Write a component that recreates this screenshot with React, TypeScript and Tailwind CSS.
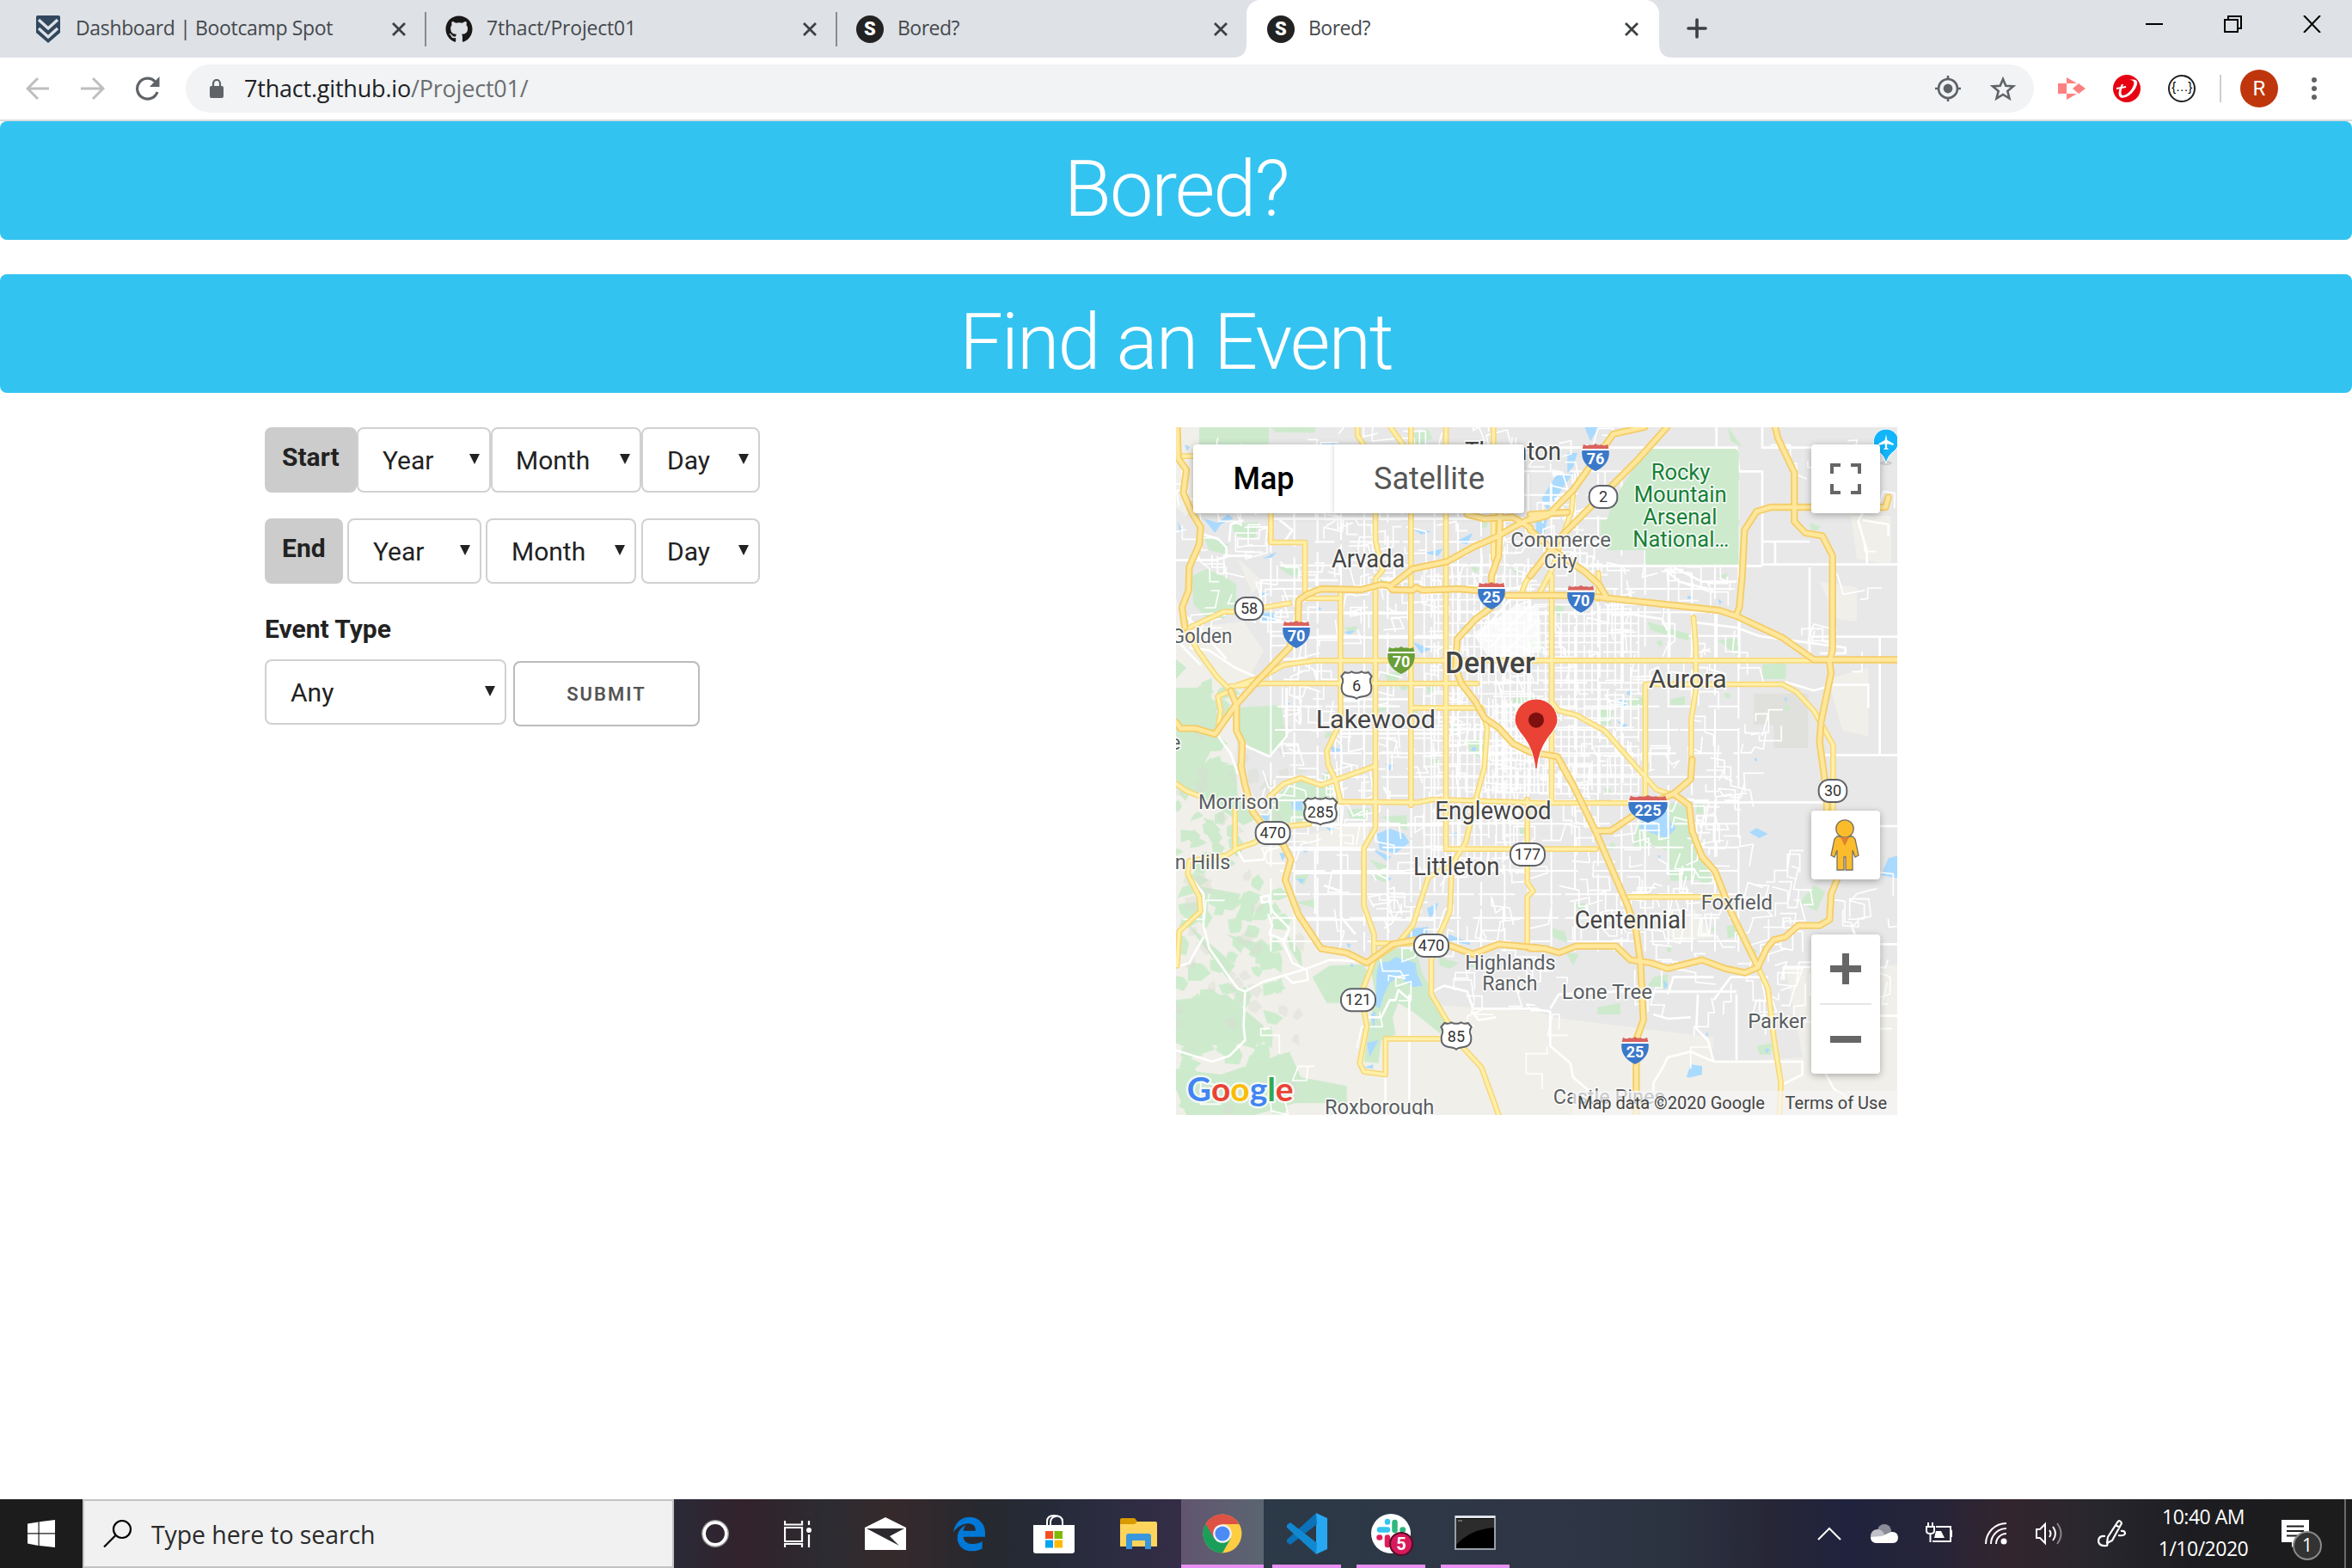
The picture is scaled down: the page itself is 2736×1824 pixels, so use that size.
import React from "react";
import { FaGithub, FaEdgeLegacy } from "react-icons/fa6";

const UI = "font-['Open_Sans','Noto_Sans',sans-serif]";

/* ---------- Browser chrome ---------- */

function CloseX({ className = "" }: { className?: string }) {
  return (
    <svg className={`h-4 w-4 shrink-0 ${className}`} viewBox="0 0 16 16" stroke="#3c4043" strokeWidth="2.8" fill="none">
      <path d="M1 1 L15 15 M15 1 L1 15" />
    </svg>
  );
}

function SBadge() {
  return (
    <div className="flex h-8 w-8 shrink-0 items-center justify-center rounded-full bg-[#222] font-['Roboto',sans-serif] text-[22px] font-black text-white">
      S
    </div>
  );
}

function Tab({ icon, title, w, sep, spacing = "" }: { icon: React.ReactNode; title: string; w: string; sep?: boolean; spacing?: string }) {
  return (
    <div className={`flex h-[67px] shrink-0 items-center ${w}`}>
      {icon}
      <span className={`ml-4 flex-1 pb-[3px] text-[23px] leading-[32px] whitespace-nowrap text-[#45494d] ${spacing}`}>{title}</span>
      <CloseX />
      <div className={`ml-[22px] h-10 w-[2px] ${sep ? "bg-[#888b90]" : "bg-transparent"}`} />
    </div>
  );
}

function TabStrip() {
  return (
    <div className="flex h-[67px] bg-[#dee1e6]">
      <div className="flex pl-10">
        <Tab
          w="w-[456px]"
          sep
          spacing="tracking-[-0.35px]"
          title="Dashboard | Bootcamp Spot"
          icon={
            <svg className="h-8 w-8 shrink-0" viewBox="0 0 32 32">
              <path d="M2 2 Q2 0 4 0 H28 Q30 0 30 2 V20 L16 32 L2 20Z" fill="#31475e" />
              <path d="M5 5 L16 15 L27 5 M5 15 L16 25 L27 15" stroke="#dee1e6" strokeWidth="3.4" fill="none" />
            </svg>
          }
        />
        <div className="w-[22px]" />
        <Tab w="w-[456px]" sep spacing="tracking-[-0.2px]" title="7thact/Project01" icon={<FaGithub className="h-8 w-8 shrink-0 text-[#191717]" />} />
        <div className="w-[22px]" />
        <Tab w="w-[456px]" spacing="tracking-[-0.5px]" title="Bored?" icon={<SBadge />} />
      </div>
      <div className="relative -ml-[2px] h-[67px] w-[480px] rounded-t-2xl bg-white pl-6">
        <svg className="absolute bottom-0 -left-4 h-4 w-4" viewBox="0 0 16 16"><path d="M16 0 V16 H0 Q16 16 16 0" fill="#fff" /></svg>
        <svg className="absolute -right-4 bottom-0 h-4 w-4" viewBox="0 0 16 16"><path d="M0 0 V16 H16 Q0 16 0 0" fill="#fff" /></svg>
        <Tab w="w-[456px]" spacing="tracking-[-0.5px]" title="Bored?" icon={<SBadge />} />
      </div>
      <svg className="mt-[21px] ml-8 h-6 w-6" viewBox="0 0 24 24" stroke="#3c4043" strokeWidth="3.6" strokeLinecap="round"><path d="M2 12 H22 M12 2 V22" /></svg>
      <div className="flex-1" />
      <svg className="mt-[18px] mr-9 h-5 w-[204px]" viewBox="0 0 204 20" fill="none" stroke="#000" strokeWidth="2">
        <path d="M0 10 H20" />
        <path d="M92 5 H107 V19 H92Z M96 5 V1 H111 V15 H107" />
        <path d="M184 0 L203 20 M203 0 L184 20" />
      </svg>
    </div>
  );
}

function Toolbar() {
  return (
    <div className="flex h-[74px] items-center border-b-2 border-[#dadce0] bg-white pr-9 pl-[30px]">
      <svg className="h-7 w-7" viewBox="0 0 28 28" fill="none" stroke="#bdbec0" strokeWidth="3"><path d="M27 14 H3 M14 2 L2 14 L14 26" /></svg>
      <svg className="ml-[36px] h-7 w-7" viewBox="0 0 28 28" fill="none" stroke="#bdbec0" strokeWidth="3"><path d="M0 14 H25 M14 2 L26 14 L14 26" /></svg>
      <svg className="ml-[36px] h-7 w-7" viewBox="0 0 28 28">
        <path d="M25 18 A12 12 0 1 1 22.5 6" fill="none" stroke="#5f6368" strokeWidth="3.2" />
        <path d="M27.5 0 V12 H16Z" fill="#5f6368" />
      </svg>
      <div className="ml-[30px] flex h-14 w-[2150px] items-center rounded-full bg-[#f1f3f4] pr-[21px] pl-[28px]">
        <svg className="h-[22px] w-4" viewBox="0 0 16 22">
          <rect x="0" y="8" width="16" height="14" rx="2" fill="#5f6368" />
          <path d="M4 9 V5 A4 4 0 0 1 12 5 V9" fill="none" stroke="#5f6368" strokeWidth="2.2" />
        </svg>
        <span className="ml-[24px] flex-1 text-[27px] leading-9 tracking-[-0.2px] whitespace-nowrap text-[#202124]">
          7thact.github.io<span className="text-[#6b6e72]">/Project01/</span>
        </span>
        <svg className="h-[30px] w-[30px]" viewBox="0 0 30 30" fill="none" stroke="#5f6368" strokeWidth="2.6">
          <circle cx="15" cy="15" r="11" /><circle cx="15" cy="15" r="5.4" fill="#5f6368" stroke="none" />
          <path d="M15 0 V5 M15 25 V30 M0 15 H5 M25 15 H30" />
        </svg>
        <svg className="ml-[34px] h-[30px] w-[30px]" viewBox="0 0 30 30" fill="none" stroke="#5f6368" strokeWidth="2.6">
          <path d="M15 4 L18.3 11.8 L27 12.4 L20.3 18 L22.5 26.5 L15 22 L7.5 26.5 L9.7 18 L3 12.4 L11.7 11.8Z" />
        </svg>
      </div>
      <svg className="ml-[28px] h-[26px] w-8" viewBox="0 0 32 26">
        <path d="M0 7 H10 V19 H0Z M10 0 L22 7 H10Z M10 26 L22 19 H10Z M24 7 L32 13 L24 19Z" fill="#ff8080" />
        <path d="M10 7 H21 V19 H10Z" fill="#fff" />
        <path d="M24 7 L17 13 L24 19Z" fill="#ff8080" />
      </svg>
      <svg className="ml-8 h-8 w-8" viewBox="0 0 32 32">
        <circle cx="16" cy="16" r="16" fill="#e60012" />
        <path d="M10 11 Q3 24 10 27 Q19 27 26 16 Q33 3 18 6 Q26 5 24 12 Q20 22 12 24 Q7 24 12 11Z" fill="#fff" />
        <path d="M4 16 L15 14" fill="none" stroke="#fff" strokeWidth="2" />
      </svg>
      <div className="ml-8 flex h-8 w-8 items-center justify-center rounded-full border-2 border-[#222] pb-1 font-['Liberation_Sans',sans-serif] text-[15px] tracking-[-0.5px] text-black">{"{…}"}</div>
      <div className="ml-7 h-8 w-[2px] bg-[#cccdd0]" />
      <div className="ml-[22px] flex h-11 w-11 items-center justify-center rounded-full bg-[#bf360c] font-['Roboto',sans-serif] text-[24px] text-white">R</div>
      <svg className="ml-[39px] h-7 w-[6px]" viewBox="0 0 6 28" fill="#5f6368"><circle cx="3" cy="4" r="3" /><circle cx="3" cy="14" r="3" /><circle cx="3" cy="24" r="3" /></svg>
    </div>
  );
}

/* ---------- Form ---------- */

function Select({ label, className }: { label: string; className: string }) {
  return (
    <div className={`flex h-[76px] items-center rounded-lg border-2 border-[#d1d1d1] bg-white pr-[11px] ${className}`}>
      <span className="flex-1 pt-px text-[30px] leading-none">{label}</span>
      <svg className="mb-[3px] h-3 w-3" viewBox="0 0 12 12"><path d="M0 0 H12 L6 12Z" fill="#222" /></svg>
    </div>
  );
}

function EventForm() {
  return (
    <div className="w-[1060px] text-[#222]">
      <div className="flex">
        <div className="h-[76px] w-[107px] rounded-lg bg-[#ccc] pt-[17px] pl-5 text-[30px] leading-[36px] font-bold">Start</div>
        <Select label="Year" className="w-[156px] pl-[28px]" />
        <Select label="Month" className="w-[175px] pl-[27px]" />
        <Select label="Day" className="w-[138px] pl-[28px]" />
      </div>
      <div className="mt-[30px] flex">
        <div className="h-[76px] w-[91px] rounded-lg bg-[#ccc] pt-[17px] pl-5 text-[30px] leading-[36px] font-bold">End</div>
        <Select label="Year" className="ml-[5px] w-[156px] pl-[28px]" />
        <Select label="Month" className="ml-[5px] w-[175px] pl-[28px]" />
        <Select label="Day" className="ml-[6px] w-[138px] pl-[28px]" />
      </div>
      <div className="mt-[35px] text-[30px] leading-[36px] font-bold">Event Type</div>
      <div className="mt-[17px] flex">
        <Select label="Any" className="w-[281px] pl-[28px]" />
        <div className="mt-[2px] ml-2 flex h-[76px] w-[217px] items-center justify-center rounded-lg border-2 border-[#bbb] text-[22px] font-semibold tracking-[2px] text-[#555]">SUBMIT</div>
      </div>
    </div>
  );
}

/* ---------- Map drawing: third-of-a-pixel units ---------- */

type Pt = [number, number];

function makeRandom(seed: number) {
  let s = seed;
  return () => {
    s = (s * 1664525 + 1013904223) % 4294967296;
    return s / 4294967296;
  };
}

const A = "translate(0 0)";
const B = "translate(1260 0)";
const C = "translate(0 1200)";
const D = "translate(1260 1200)";

const highways: [string, string][] = [
  [A, "M24 1050 L40 1072 H90 L160 1092 L225 1000 L300 915 L420 790 L450 700 L452 625 L480 605 L530 585 L670 588 L740 570 L765 573 L780 588 L850 590 L862 580 L885 590 L1010 585 L1125 595"],
  [A, "M780 570 L850 515 L970 490 L1060 440 L1140 405 L1200 370 L1290 325 M1040 325 L1100 340 L1200 335 L1260 372"],
  [A, "M1155 320 L1150 470 L1125 540 L1125 650 L1070 690 L1005 760 L1000 860 L1020 915 L1070 980 L1100 1035 L1150 1070 L1200 1125 L1260 1155 L1355 1170 L1410 1270"],
  [A, "M28 20 L32 130 L60 170 L50 250 L80 320 L110 370 L105 430 L70 510 L68 590 L45 650 L55 720 M215 940 L235 990 L235 1080 L255 1120 L252 1215"],
  [B, "M400 20 L290 45 L150 240 L60 330 L0 345 M478 20 L370 140 L250 260 L110 400 L0 540 M0 325 L130 318"],
  [B, "M-80 608 H130 L240 614 L660 660 L720 680 L880 755 L990 832 H1285 M0 380 L80 450 L190 525 L240 570 L270 620"],
  [B, "M720 675 L730 650 L740 540 L748 380 L790 315 L840 300 H1240 L1250 265 M855 20 L865 60 L922 180 V350 L960 390 L1020 400 L1055 470 V800 L1045 840 L1050 880 L1015 1050 L1010 1120 L1035 1300 V1380"],
  [C, "M250 0 L265 70 L290 160 L330 215 L400 280 L425 330 L405 400 L450 520 L530 640 L620 655 L690 690 L780 625 L860 610 L980 630 L1060 660 L1150 625 L1290 638"],
  [D, "M110 0 L150 70 L230 235 L340 490 L370 580 L385 690 L395 890 L370 960 V1221"],
  [D, "M0 640 L50 640 L100 655 L160 632 H300 L350 680 L420 690 L480 710 L600 680 L680 710 L750 725 L795 705 L825 640 L850 610 L890 600 L935 560 H1010 L1045 540 L1050 450 L1075 390"],
  [D, "M565 -20 L560 50 L500 100 L430 130 L280 230 H235 M500 100 L555 140 L565 230 L600 320 L645 370 L700 510 L795 705"],
];

const arterials: [string, string][] = [
  [A, "M720 320 V415 L745 520 L720 550 V1420 L680 1490 V1690 L715 1790 V1880 L670 2000 L690 2110 L665 2240 L680 2270 L755 2280 V2155 H950"],
  [A, "M844 20 V1340 M966 20 V1493 H1490 M598 590 V1050 L550 1150 L555 1200 L580 1250 L598 1325"],
  [A, "M355 320 V423 H474 V610 M480 618 H598 M658 20 V50 L690 100 L720 140 M772 20 L815 80 L844 140 M1132 20 V480"],
  [A, "M24 122 H100 M60 725 L190 665 H240 M330 650 L420 635 M55 720 L100 800 L165 890 L215 940 M215 925 L330 915 H1075 M240 920 L330 890 L400 850 L510 835 H2545"],
  [A, "M844 1000 H1090 L1110 1070 L1100 1210 L1070 1320 L1035 1470 L985 1550 L905 1590 L850 1760 L800 1820 L700 1890"],
  [A, "M215 940 L170 960 L180 1010 L172 1060 M350 1310 L400 1265 L460 1245 L530 1270 L720 1203 M1290 500 L1245 560 L1230 600"],
  [B, "M75 540 V980 L100 1010 L160 1025 L260 1080 L440 1285 L500 1305 M75 980 V1325 M150 250 L145 310 L115 400 L75 520 L30 605 M238 530 V620"],
  [B, "M402 1310 V918 H880 L930 945 L990 1010 L1057 1130 V1380 M570 685 L578 790 V940 L562 1040 V1210"],
  [C, "M595 128 L870 130 L920 120 L1290 132 H1600 M400 215 L490 205 M715 622 H860 M985 390 L980 510 L945 590 L915 680 V800 L980 910 L1030 990 L1090 1055 L1150 1221 M1250 120 V410 L1270 440 L1250 460 V640"],
  [C, "M24 65 L60 90 L110 110 M230 160 V290 M28 700 L35 580 L110 510 L105 460 L65 380 L70 335 L200 315 L240 290 L300 270 L320 250"],
  [D, "M340 460 H670 M795 705 L830 780 L850 950 L875 1110 L870 1221"],
];

const whiteRoads: [string, string][] = [
  [A, "M120 395 L170 410 L200 440 V470 H290 M24 485 H160 L210 470 M355 340 H1130 M210 420 L215 360 L260 345 M320 555 H590 M320 555 V700 H400 M600 670 H840 M480 755 H960 M410 930 V1100 L350 1170 L260 1130 M600 970 H840 M600 1090 H960 M400 423 L430 380 L380 340"],
  [A, "M70 790 L140 800 L230 860 L320 900 M24 760 L60 800 L110 850 M60 680 L120 740 L200 830 M165 1090 L215 1160 L240 1230"],
  [B, "M0 92 H720 L730 175 H810 V500 H1285 M810 20 V92 H985 M180 505 H810 M810 420 H975 M855 420 V500 M975 510 V830 M980 752 H1285 M1220 752 V1165 M1010 1165 H1285 M1160 320 L1145 350 L1175 450 V500 M1160 345 L1250 360 V400"],
  [B, "M470 515 L520 560 L640 590 M500 510 L600 560 L720 560 M560 700 L720 720 L800 750 L1100 790 V810 H1010 M890 910 L990 940 L1060 920 H1180 V1000 M650 20 V95 M730 700 V835 M650 660 V835 M486 670 V835 M330 670 L460 690 L480 730"],
  [C, "M75 390 L120 450 V560 L140 640 L210 740 L240 780 L265 790 L330 755 L480 710 L560 680 L680 685 M120 600 L70 690 L24 705 M265 790 L260 910 L265 960 L210 1015 L150 1035 L24 995 M400 280 L340 300 L330 330 L260 335 L240 300"],
  [C, "M320 460 L350 455 V475 L325 480Z M350 475 L360 510 L420 570 L400 610 L350 590 L360 560 L345 520 M420 570 L400 620 L430 690 L480 715 L485 750 L430 760 L405 735 M838 800 V1180 M755 1090 V1180 M690 880 L740 880 L770 820 H790 L800 785 L835 815"],
  [C, "M470 210 H960 M425 295 H720 M440 377 H960 M600 215 V530 L650 590 M470 540 H930 M510 300 V520 M540 420 L600 440 M920 790 L960 770 L1040 790 L1060 850 L1290 850 M1060 860 L1080 890 L1140 880"],
  [D, "M0 850 L70 860 V980 L140 1040 L150 1090 L210 1140 M70 850 L100 800 L300 790 H720 M720 800 V1030 M585 800 L580 920 L620 960 L640 1035 H950 V1080 L870 1120 M640 1035 L560 1000 L480 1020 L460 1060 L430 1110 V1180 M430 870 L480 885 L560 880"],
  [D, "M885 750 V705 H1000 M1200 875 H1290 M1200 625 H1290 M1000 213 H1290 M570 130 H1040 M1030 1075 L1060 1130 L1140 1180 M480 800 L500 740 L640 740 M640 820 L700 740 L830 740"],
];

const parks: [string, string][] = [
  [A, "M105 20 H348 V81 H105Z M355 20 H510 V40 L370 38Z M850 45 L900 25 L920 60 L860 90Z"],
  [A, "M120 400 L150 410 L208 430 L200 465 L140 450Z M80 540 L130 515 L200 545 L235 570 L232 640 L190 690 L130 685 L85 640Z M220 360 L310 350 L300 410 L230 400Z"],
  [A, "M240 1000 L390 990 L400 1060 L410 1110 L350 1170 L290 1150 L240 1080Z M24 830 L60 860 L24 900Z M24 930 L120 930 L190 1060 L120 1200 L24 1230Z M380 510 L460 505 L440 550Z M610 720 L660 715 L640 745Z"],
  [A, "M1255 760 H1300 V810 H1255Z M750 880 L810 875 L780 940Z M1200 965 L1290 960 V1010 H1200Z M1040 1120 L1100 1100 L1110 1180 L1050 1160Z"],
  [B, "M405 97 H715 Q728 97 728 120 V500 H402 V450 H270 L245 400 V345 H270Z M690 20 L740 90 L700 70Z"],
  [B, "M90 640 L120 650 L105 685 L85 670Z M410 700 L560 745 L550 765 L420 730Z M655 765 L725 755 V820Z M810 848 L892 845 V900 H812Z M340 970 L400 960 L390 1000 L345 1005Z M240 1005 L290 1010 L280 1060 L245 1060Z M490 970 L540 960 L540 990 L490 990Z M650 540 L690 530 L680 550Z"],
  [C, "M24 0 H230 L240 110 L300 190 L260 210 L100 100 L24 60Z M370 110 L440 50 L600 80 L570 190 L330 210Z M620 155 L700 150 L690 190 L630 185Z M740 180 L830 175 V230Z M430 390 L490 375 L470 420Z M440 480 L520 465 L510 500Z M700 330 L760 350 L740 375Z M700 390 L755 380 V410Z"],
  [C, "M410 590 L460 650 L465 710 L420 640Z M500 740 L560 700 L680 695 L700 740 L620 830 L550 830Z M700 690 L790 640 L860 640 L885 730 L950 840 L985 930 L950 940 L850 860 L800 830 L780 880 L790 940 L740 960 L730 1040 L680 1035 L700 900 L720 800Z M940 670 L1010 690 L980 710 L945 700Z"],
  [C, "M200 590 L340 630 L300 660Z M90 420 L250 450 L230 500Z M60 550 L230 700 L200 740Z M24 820 L200 800 L330 910 L300 990 L200 960 L90 1000 L24 970Z M24 1060 L180 1080 L420 1000 L460 1090 L620 1120 V1180 H440 L300 1221 H60 L24 1130Z"],
  [D, "M370 210 L500 130 L555 150 L560 240 L600 330 L640 400 L600 420 L590 400 L490 405 L480 300 L430 280 L360 290Z M580 135 H604 V170 H580Z M430 740 L480 730 L480 780 L410 770Z M235 845 L315 830 V870 L235 870Z M75 570 L120 580 L130 620 L80 600Z M125 655 L170 660 L150 700Z M685 560 L730 555 L735 590 L690 605Z M790 980 L845 970 L840 1010 L800 1010Z M940 480 L990 420 L1030 440 L1000 510Z M160 485 L190 480 V510 L165 505Z"],
];

const waters: [string, string][] = [
  [A, "M55 80 L72 90 L62 105Z M120 340 L170 355 L205 325 L225 340 L180 360 L160 390Z M30 350 L50 390 L35 385Z M325 480 L375 455 L360 475Z M315 670 H370 V700 H320Z M520 80 L600 72 L560 84Z M850 375 L915 385 L880 395Z M890 460 L955 445 L940 470Z M850 770 L915 795 L880 810Z M610 735 L650 730 L630 745Z M560 1130 L610 1150 L570 1155Z M320 600 L345 595 L325 615Z M755 1195 L785 1200 L770 1220Z M1000 420 L1060 390 L1040 430Z"],
  [B, "M190 20 H240 L210 70Z M130 110 H165 L150 160 L130 180Z M90 190 L150 180 L110 240 L60 310 L40 270Z M20 350 L60 340 L50 390 L20 395Z M310 970 L335 970 V995 H310Z M300 1045 L340 1060 L330 1070Z M30 800 L50 800 L40 810Z M655 620 L670 630 L660 640Z M425 465 L440 470 L432 482Z M885 965 L897 965 L893 980Z"],
  [C, "M725 240 L770 222 L820 240 L838 270 L790 308 L735 295Z M705 290 L775 320 L760 335Z M425 130 L465 125 V160 L430 155Z M315 170 L350 175 L340 200Z M545 215 L580 220 L560 230Z M445 395 L475 398 L460 415Z M385 305 L410 310 L395 335Z M850 570 L905 565 L900 590 L850 610 L830 600Z M975 590 L1050 620 L1050 628 L975 612Z"],
  [C, "M735 690 L770 685 L790 670 L860 690 L865 730 L885 770 L850 775 L800 735 L770 760 L750 800 L735 850 L720 840 L725 720Z M900 500 L940 480 L930 510 L910 535Z M705 870 L720 860 L715 930Z M690 970 L730 960 L700 1020Z M680 1055 L712 1045 V1060Z M975 240 L1010 235 L1000 250Z"],
  [D, "M380 220 L400 185 L480 150 L490 200 L510 220 L475 255 L400 228Z M765 235 L790 220 L830 240 L800 255Z M1225 385 L1250 325 L1285 315 V395Z M545 1090 L560 1045 L600 1050 L600 1080 L560 1090Z M465 750 L480 765 L470 785Z M820 990 L835 990 L825 1008Z M612 935 L622 935 L618 948Z"],
];

function buildStreets(): string {
  const rnd = makeRandom(77);
  const isRural = (x: number, y: number) =>
    (x < 700 && y > 1560) || (x < 340 && y > 700) || (x > 980 && y > 2050) || (x < 980 && y > 1980) ||
    (x > 2070 && y > 900 && y < 1550) || (x > 1980 && y < 1000) || (x > 1520 && x < 2000 && y < 500);
  let d = "";
  for (let i = 0; i < 820; i++) {
    let x = 30 + rnd() * 2500;
    let y = 25 + rnd() * 2380;
    if (isRural(x, y) && rnd() > 0.07) continue;
    d += `M${x.toFixed(0)} ${y.toFixed(0)}`;
    const n = 2 + Math.floor(rnd() * 4);
    let horizontal = rnd() > 0.5;
    for (let k = 0; k < n; k++) {
      const step = (20 + rnd() * 60) * (rnd() > 0.35 ? 1 : -1);
      const skew = rnd() > 0.55 ? (rnd() - 0.5) * 44 : 0;
      if (horizontal) { x += step; y += skew; } else { y += step; x += skew; }
      horizontal = !horizontal;
      d += `L${x.toFixed(0)} ${y.toFixed(0)}`;
    }
  }
  return d;
}

function buildGrid(x0: number, y0: number, x1: number, y1: number, dx: number, dy: number, seed: number): string {
  const rnd = makeRandom(seed);
  let d = "";
  for (let x = x0; x <= x1; x += dx) {
    let y = y0 + rnd() * 40;
    while (y < y1) {
      const len = 50 + rnd() * 260;
      d += `M${x.toFixed(0)} ${y.toFixed(0)}V${Math.min(y1, y + len).toFixed(0)}`;
      y += len + rnd() * 50;
    }
  }
  for (let y = y0; y <= y1; y += dy) {
    let x = x0 + rnd() * 40;
    while (x < x1) {
      const len = 60 + rnd() * 260;
      d += `M${x.toFixed(0)} ${y.toFixed(0)}H${Math.min(x1, x + len).toFixed(0)}`;
      x += len + rnd() * 60;
    }
  }
  return d;
}

function buildShards(seed: number, count: number, box: [number, number, number, number], size: number): string {
  const rnd = makeRandom(seed);
  let d = "";
  for (let i = 0; i < count; i++) {
    const cx = box[0] + rnd() * (box[2] - box[0]);
    const cy = box[1] + rnd() * (box[3] - box[1]);
    const pts: Pt[] = [];
    for (let k = 0; k < 5; k++) {
      const a = (k / 5) * Math.PI * 2;
      const r = size * (0.3 + rnd());
      pts.push([cx + Math.cos(a) * r, cy + Math.sin(a) * r]);
    }
    d += "M" + pts.map((p) => p.map((v) => v.toFixed(0)).join(" ")).join("L") + "Z";
  }
  return d;
}

const streets = buildStreets();
const cityGrid =
  buildGrid(890, 500, 1240, 1580, 25, 41, 5) +
  buildGrid(1260, 640, 1640, 1300, 27, 33, 9) +
  buildGrid(1130, 960, 1350, 1300, 16, 28, 12);
const mileGrid = buildGrid(355, 175, 1990, 1850, 81.6, 82, 21);

function Interstate({ x, y, n, green, wide }: { x: number; y: number; n: string; green?: boolean; wide?: boolean }) {
  const w = wide ? 138 : 96;
  return (
    <g transform={`translate(${x} ${y})`}>
      <g transform={`scale(${w / 96} 1)`}>
        <path d="M6 2 Q18 10 28 4 Q40 8 48 0 Q56 8 68 4 Q78 10 90 2 L94 18 H2Z" fill={green ? "#689f38" : "#d9625e"} />
        <path d="M1 24 H95 Q100 72 48 96 Q-4 72 1 24Z" fill={green ? "#689f38" : "#3a78c9"} />
      </g>
      <rect x="0" y="18" width={w} height="6" fill="#fff" />
      <text x={w / 2} y="72" textAnchor="middle" fontSize="54" fontWeight="700" fill="#fff">{n}</text>
    </g>
  );
}

function Oval({ x, y, n, w = 98 }: { x: number; y: number; n: string; w?: number }) {
  return (
    <g>
      <rect x={x - w / 2} y={y - 39} width={w} height="78" rx="36" fill="#fff" stroke="#606368" strokeWidth="6" />
      <text x={x} y={y + 18} textAnchor="middle" fontSize="54" fill="#333">{n}</text>
    </g>
  );
}

function UsRoute({ x, y, n, w = 110 }: { x: number; y: number; n: string; w?: number }) {
  return (
    <g transform={`translate(${x - w / 2} ${y})`}>
      <g transform={`scale(${w / 110} 1)`}>
        <path d="M14 4 Q28 10 38 2 Q48 8 55 6 Q62 8 72 2 Q82 10 96 4 L108 18 Q98 32 106 48 Q112 84 80 88 Q62 90 55 96 Q48 90 30 88 Q-2 84 4 48 Q12 32 2 18Z" fill="#fff" stroke="#606368" strokeWidth="6" />
      </g>
      <text x={w / 2} y="70" textAnchor="middle" fontSize="54" fill="#333">{n}</text>
    </g>
  );
}

function Place({ x, y, len, children, size = 86, color = "#454545", bold }: { x: number; y: number; len: number; children: string; size?: number; color?: string; bold?: boolean }) {
  return (
    <text x={x} y={y} textLength={len} lengthAdjust="spacingAndGlyphs" fontSize={size} fontWeight={bold ? 500 : 400} fill={color} stroke="#fff" strokeOpacity="0.8" strokeWidth="10" strokeLinejoin="round" paintOrder="stroke">
      {children}
    </text>
  );
}

const layer = (items: [string, string][]) => items.map(([t, d], i) => <path key={i} transform={t} d={d} />);

function MapDrawing() {
  return (
    <svg className="block h-[800px] w-[839px] font-['Roboto',sans-serif]" viewBox="24 21 2517 2400">
      <rect x="24" y="21" width="2517" height="2400" fill="#e8e8e8" />
      <g fill="#f0efe9">
        <path d="M24 21 H110 L140 200 L60 330 L24 300Z M24 620 L70 720 L260 700 L330 800 L250 950 L230 1200 L400 1470 L410 1650 L520 1850 L700 1880 L720 2000 L960 2040 L1280 2060 L1600 2150 L1700 2421 H24Z" />
        <path d="M1330 2080 L1900 2150 L1890 2240 L2541 2200 V2421 H1280Z M2150 1900 H2541 V2421 H2250Z M2270 560 L2400 580 V700 L2330 690Z M2300 900 L2440 860 V1100 L2350 1080Z M2380 330 H2520 V500 L2400 480Z M430 1450 L700 1400 L690 1480 L540 1500Z M240 480 L330 560 L290 600Z M1720 1750 L1830 1700 L1900 1800 L1760 1820Z" />
      </g>
      <path d="M2040 950 H2230 V1140 H2110 V1060 H2040Z" fill="#e0e0dd" />
      <path d={buildShards(31, 85, [30, 1600, 400, 2400], 38)} fill="#cdeccd" />
      <path d={buildShards(47, 50, [24, 930, 230, 1560], 30)} fill="#cdeacd" />
      <g fill="#cdeacd">{layer(parks)}</g>
      <path d={buildShards(13, 60, [24, 1000, 460, 2400], 26)} fill="#d9ddd2" opacity="0.45" />
      <path d={buildShards(3, 26, [500, 200, 2300, 2000], 17)} fill="#cdeacd" />
      <g fill="#aadaff">
        {layer(waters)}
        <path d={buildShards(8, 22, [400, 200, 2100, 1900], 9)} />
      </g>
      <g fill="none" stroke="#fff" strokeLinejoin="round">
        <path d={mileGrid} strokeWidth="6" />
        <path d={streets} strokeWidth="5" />
        <path d={cityGrid} strokeWidth="5" />
        <g strokeWidth="8">{layer(whiteRoads)}</g>
      </g>
      <path d="M1060 740 L1140 690 L1210 640 L1290 650 L1300 800 L1200 830 L1110 820Z" fill="#fff" opacity="0.75" />
      <path d="M1080 750 L1200 610 M1120 790 L1260 640 M1160 820 L1290 690" stroke="#fff" strokeWidth="8" />
      <path transform={B} d="M402 97 H715 Q728 97 728 120 V500 H402 V450 H270 L245 400 L300 260Z" fill="#cdeacd" />
      <g fill="none" strokeLinejoin="round" strokeLinecap="round">
        <g stroke="#f8d676" strokeWidth="20">{layer(arterials)}</g>
        <g stroke="#fff0a8" strokeWidth="11">{layer(arterials)}</g>
        <g stroke="#f4cd69" strokeWidth="25">{layer(highways)}</g>
        <g stroke="#ffe79c" strokeWidth="14">{layer(highways)}</g>
      </g>

      <Interstate x={1077} y={561} n="25" />
      <Interstate x={396} y={696} n="70" />
      <Interstate x={762} y={786} n="70" green />
      <Interstate x={1440} y={78} n="76" />
      <Interstate x={1389} y={572} n="70" />
      <Interstate x={1602} y={1305} n="225" wide />
      <Interstate x={1578} y={2148} n="25" />
      <Oval x={279} y={654} n="58" />
      <Oval x={1515} y={264} n="2" />
      <Oval x={362} y={1437} n="470" w={120} />
      <Oval x={915} y={1830} n="470" w={120} />
      <Oval x={660} y={2020} n="121" w={120} />
      <Oval x={1251} y={1512} n="177" w={120} />
      <Oval x={2316} y={1290} n="30" />
      <UsRoute x={654} y={872} n="6" />
      <UsRoute x={528} y={1312} n="285" w={120} />
      <UsRoute x={1002} y={2096} n="85" />

      <Place x={1032} y={136} len={336}>Thornton</Place>
      <Place x={567} y={510} len={256}>Arvada</Place>
      <Place x={8} y={775} len={212} size={72} color="#5b5f63">Golden</Place>
      <Place x={963} y={878} len={315} size={104} bold>Denver</Place>
      <Place x={512} y={1071} len={418}>Lakewood</Place>
      <Place x={2} y={1147} len={38} size={72} color="#5b5f63">e</Place>
      <Place x={1192} y={439} len={350} size={72} color="#5b5f63">Commerce</Place>
      <Place x={1308} y={512} len={116} size={72} color="#5b5f63">City</Place>
      <Place x={1674} y={930} len={272}>Aurora</Place>
      <g>
        <Place x={1682} y={204} len={206} size={78} color="#188038">Rocky</Place>
        <Place x={1622} y={282} len={324} size={78} color="#188038">Mountain</Place>
        <Place x={1654} y={360} len={258} size={78} color="#188038">Arsenal</Place>
        <Place x={1618} y={437} len={336} size={78} color="#188038">National…</Place>
      </g>
      <Place x={102} y={1353} len={282} size={72} color="#5b5f63">Morrison</Place>
      <Place x={928} y={1390} len={406}>Englewood</Place>
      <Place x={20} y={1564} len={194} size={72} color="#5b5f63">n Hills</Place>
      <Place x={852} y={1585} len={301}>Littleton</Place>
      <Place x={1856} y={1704} len={250} size={72} color="#5b5f63">Foxfield</Place>
      <Place x={1415} y={1769} len={390}>Centennial</Place>
      <Place x={1033} y={1915} len={316} size={72} color="#5b5f63">Highlands</Place>
      <Place x={1093} y={1987} len={192} size={72} color="#5b5f63">Ranch</Place>
      <Place x={1370} y={2017} len={316} size={72} color="#5b5f63">Lone Tree</Place>
      <Place x={2020} y={2118} len={204} size={72} color="#5b5f63">Parker</Place>
      <Place x={543} y={2418} len={382} size={72} color="#5b5f63">Roxborough</Place>
      <Place x={1340} y={2383} len={390} size={72} color="#5b5f63">Castle Pines</Place>

      <g transform="translate(2456 26)">
        <ellipse cx="46" cy="120" rx="20" ry="8" fill="#bbb" opacity="0.6" />
        <path d="M46 122 Q40 95 22 82 A44 44 0 1 1 70 82 Q52 95 46 122Z" fill="#12b5fb" stroke="#fff" strokeWidth="3" />
        <path d="M46 20 L50 40 L72 52 V58 L50 53 L49 66 L56 72 H36 L43 66 L42 53 L20 58 V52 L42 40Z" fill="#fff" />
      </g>
      <g>
        <path d="M1278 1213 Q1272 1150 1240 1105 Q1206 1065 1206 1044 A75 75 0 0 1 1356 1044 Q1356 1065 1322 1105 Q1290 1150 1284 1213 Q1281 1217 1278 1213Z" fill="#ea4335" stroke="#fff" strokeWidth="3" />
        <circle cx="1281" cy="1043" r="27" fill="#7f1010" />
      </g>
      <text x="62" y="2373" textLength="372" lengthAdjust="spacingAndGlyphs" fontSize="114" fontWeight="700" fontFamily="Lato, sans-serif" stroke="#fff" strokeOpacity="0.8" strokeWidth="14" strokeLinejoin="round" paintOrder="stroke">
        <tspan fill="#4285f4">G</tspan><tspan fill="#ea4335">o</tspan><tspan fill="#fbbc04">o</tspan><tspan fill="#4285f4">g</tspan><tspan fill="#34a853">l</tspan><tspan fill="#ea4335">e</tspan>
      </text>
    </svg>
  );
}

function MapPanel() {
  return (
    <div className="relative h-[800px] w-[839px] overflow-hidden font-['Roboto',sans-serif]">
      <MapDrawing />
      <div className="absolute top-5 left-5 flex h-20 w-[385px] rounded bg-white shadow-[0_2px_8px_rgba(0,0,0,0.3)]">
        <div className="flex w-[164px] items-center justify-center pb-px text-[36px] font-medium text-black">Map</div>
        <div className="flex flex-1 items-center justify-center pb-px text-[36px] text-[#565656] shadow-[-2px_0_4px_rgba(0,0,0,0.1)]">Satellite</div>
      </div>
      <div className="absolute top-5 right-5 flex h-20 w-20 items-center justify-center rounded bg-white shadow-[0_2px_8px_rgba(0,0,0,0.3)]">
        <svg className="h-9 w-9" viewBox="0 0 36 36" fill="none" stroke="#666" strokeWidth="4"><path d="M2 12 V2 H12 M24 2 H34 V12 M34 24 V34 H24 M12 34 H2 V24" /></svg>
      </div>
      <div className="absolute top-[446px] right-5 flex h-20 w-20 items-center justify-center rounded bg-white shadow-[0_2px_8px_rgba(0,0,0,0.3)]">
        <svg className="mr-[2px] h-[60px] w-[34px]" viewBox="0 0 34 60" fill="#fbbc2c" stroke="#7a7263" strokeWidth="1.3">
          <path d="M8 20 H26 L29 23 L33 42 L29 44 L26 36 V59 H18 V44 H16 V59 H8 V36 L5 44 L1 42 L5 23Z" />
          <circle cx="17" cy="11" r="10.2" />
          <path d="M12 21 H22 L17 31Z" fill="#e08033" stroke="none" />
        </svg>
      </div>
      <div className="absolute top-[590px] right-5 flex h-[162px] w-20 flex-col items-center rounded bg-white shadow-[0_2px_8px_rgba(0,0,0,0.3)]">
        <svg className="mt-[22px] h-9 w-9" viewBox="0 0 36 36" fill="#666"><path d="M14 0 H22 V14 H36 V22 H22 V36 H14 V22 H0 V14 H14Z" /></svg>
        <div className="mt-[22px] h-[2px] w-[60px] bg-[#e6e6e6]" />
        <svg className="mt-[22px] h-9 w-9" viewBox="0 0 36 36" fill="#666"><path d="M0 14 H36 V22 H0Z" /></svg>
      </div>
      <div className="absolute right-0 bottom-0 flex h-7 w-[378px] items-center justify-between bg-[#f5f5f5]/70 pr-3 pl-[6px] text-[20px] whitespace-nowrap text-[#444]">
        <span>Map data ©2020 Google</span>
        <span>Terms of Use</span>
      </div>
    </div>
  );
}

/* ---------- Taskbar ---------- */

function Taskbar() {
  return (
    <div
      className={`flex h-20 shrink-0 items-center text-white ${UI} bg-[linear-gradient(90deg,#1c1c1c_0px,#1c1c1c_96px,#2a2a38_784px,#33222a_870px,#2c2c32_960px,#36292c_1040px,#27292f_1140px,#262b3a_1230px,#352d48_1372px,#2c3947_1480px,#2f3645_1800px,#2b3240_1950px,#272637_2060px,#20233e_2150px,#262438_2250px,#33252d_2340px,#28272e_2440px,#1d1d21_2550px,#1c1c1c_2736px)]`}
    >
      <svg className="ml-8 h-8 w-8" viewBox="0 0 32 32" fill="#fff"><path d="M0 4.5 L12.5 2.4 V15.2 H0Z M13.7 2.2 L32 0 V15.2 H13.7Z M0 16.6 H12.5 V30 L0 27.6Z M13.7 16.6 H32 V32 L13.7 30Z" /></svg>
      <div className="ml-8 flex h-20 w-[688px] items-center border-2 border-[#c3c3c3] bg-[#f1f1f1] pl-[22px]">
        <svg className="h-8 w-[34px]" viewBox="0 0 34 32" fill="none" stroke="#000" strokeWidth="2.2"><circle cx="22" cy="11" r="10" /><path d="M14.5 18 L1 31.5" /></svg>
        <span className="mt-[2px] ml-[22px] text-[28.5px] leading-10 tracking-[-0.1px] text-[#2b2b2b]">Type here to search</span>
      </div>
      <svg className="ml-8 h-8 w-8" viewBox="0 0 32 32" fill="none"><circle cx="16" cy="16" r="13" stroke="#fff" strokeWidth="4" /><circle cx="16" cy="16" r="15.3" stroke="#999" strokeWidth="1.3" /></svg>
      <svg className="ml-16 h-8 w-8" viewBox="0 0 32 32" fill="none" stroke="#fff" strokeWidth="2.2">
        <path d="M1 9 H21 V25 H1Z M1 1 V5.5 H21 V1 M1 32 V28 H21 V32 M29 1 V6 M29 17 V32" /><circle cx="29" cy="12" r="3" fill="#fff" stroke="none" />
      </svg>
      <svg className="ml-[62px] h-[38px] w-12" viewBox="0 0 48 38" fill="#fff"><path d="M0 12 L24 0 L48 12 V38 H0Z" /><path d="M2 13 H46 L29 22 L40 33 L19 22Z" fill="#2c2a2e" /></svg>
      <FaEdgeLegacy className="ml-[53px] h-[43px] w-[41px] text-[#0078d7]" />
      <svg className="ml-[54px] h-[46px] w-[48px]" viewBox="0 0 48 46">
        <path d="M16 14 V9 Q16 2 24 2 Q34 2 34 9 V14 M20 14 V9 Q21 3 27 3" fill="none" stroke="#fff" strokeWidth="2" />
        <path d="M0 13 H48 V43 Q48 46 45 46 H3 Q0 46 0 43Z" fill="#fff" />
        <path d="M14 20 H23 V29 H14Z" fill="#f25022" /><path d="M24.500 20 H34 V29 H24.500Z" fill="#7fba00" /><path d="M14 30.500 H23 V39.500 H14Z" fill="#00a4ef" /><path d="M24.500 30.500 H34 V39.500 H24.500Z" fill="#ffb900" />
      </svg>
      <svg className="ml-[53px] h-9 w-[43px]" viewBox="0 0 43 36">
        <path d="M0 2 Q0 0 2 0 H17 L20 4 V10 H0Z" fill="#d99a00" /><path d="M0 7 H17 L20 4 H41 Q43 4 43 6 V33 H0Z" fill="#ffd45c" />
        <path d="M7 36 V21 Q7 18 10 18 H33 Q36 18 36 21 V36 H29 V26 H14 V36Z" fill="#3a96dd" />
      </svg>
      <div className="ml-7 flex h-20 w-24 flex-col items-center border-b-4 border-[#e78ff2] bg-gradient-to-r from-[#62556f] to-[#5a6571] pt-[17px]">
        <svg className="h-[46px] w-[46px]" viewBox="-23 -23 46 46">
          <circle r="22.500" fill="#ffcd41" />
          <path d="M0 0 L-19.500 -11.300 A22.500 22.500 0 0 0 0 22.500 L9.800 5.500Z" fill="#1a9f5b" />
          <path d="M0 -11 H19.500 A22.500 22.500 0 0 0 -19.500 -11.300 L-9.800 5.500 L0 0Z" fill="#de5246" />
          <circle r="10.800" fill="#f1f1f1" /><circle r="8.600" fill="#4c8bf5" />
        </svg>
      </div>
      <div className="ml-[10px] flex h-20 w-20 flex-col items-center border-b-4 border-[#e78ff2] pt-4">
        <svg className="h-12 w-12" viewBox="0 0 48 48">
          <path d="M35 48 L48 42 V6 L35 0Z" fill="#28a8f0" /><path d="M35 0 L1 31 V34 L5 37 L36 13Z" fill="#0b72b9" /><path d="M35 48 L1 17 V14 L5 11 L36 35Z" fill="#1189d1" />
        </svg>
      </div>
      <div className="relative ml-[18px] flex h-20 w-20 flex-col items-center border-b-4 border-[#e78ff2] pt-[17px]">
        <svg className="h-[46px] w-[46px]" viewBox="0 0 46 46">
          <circle cx="23" cy="23" r="23" fill="#fff" />
          <g strokeWidth="6.500" strokeLinecap="round">
            <path d="M19 9 V9.500 M10 18.500 H19" stroke="#36c5f0" /><path d="M27.500 10 V19 M36.500 18.500 H37" stroke="#2eb67d" />
            <path d="M27.500 28 H36 M27.500 36 V36.500" stroke="#ecb22e" /><path d="M19 27.500 V36 M9.500 27.500 H10" stroke="#e01e5a" />
          </g>
        </svg>
        <div className="absolute top-[38px] left-[38px] flex h-7 w-7 items-center justify-center rounded-full border-2 border-[#5a0c28] bg-[#d81b5c] font-['Roboto',sans-serif] text-[20px] font-bold">5</div>
      </div>
      <div className="ml-[18px] flex h-20 w-20 flex-col items-center border-b-4 border-[#e78ff2] pt-[19px]">
        <svg className="h-10 w-12" viewBox="0 0 48 40"><rect x="1" y="1" width="46" height="38" fill="#000" stroke="#9aa0a8" strokeWidth="2" /><path d="M2 4 H46 V14 Q18 16 2 34Z" fill="#2c2c2c" /><path d="M1 1.500 H47" stroke="#dfe3ea" strokeWidth="3" /><path d="M4 6 H9" stroke="#aaa" /></svg>
      </div>
      <div className="flex-1" />
      <svg className="h-4 w-7" viewBox="0 0 28 16" fill="none" stroke="#fff" strokeWidth="2"><path d="M1 15 L14 2 L27 15" /></svg>
      <svg className="ml-[34px] h-[22px] w-8" viewBox="0 0 32 22"><circle cx="16" cy="8" r="8" fill="#8c8c98" /><circle cx="8" cy="14" r="8" fill="#c0c0c8" /><path d="M0 15 Q0 22 7 22 H26 Q32 22 32 15 Q31 8 24 9 L13 14Z" fill="#fff" /></svg>
      <svg className="ml-8 h-6 w-8 -translate-y-px" viewBox="0 0 32 24" fill="none" stroke="#fff" strokeWidth="2"><path d="M12 5 H29 V22 H8 M30 9 V17 M3 0 V5 M8 0 V5 M1 5 H10 V10 Q10 13 5.500 13 Q1 13 1 10Z M5.500 13 V23" /><path d="M12 10 H18 L22 18 H10Z" fill="#fff" stroke="none" /></svg>
      <svg className="ml-[37px] h-[26px] w-[26px]" viewBox="0 0 26 26" fill="none" stroke="#fff" strokeWidth="2"><path d="M1 25 A24 24 0 0 1 25 1 M7 25 A18 18 0 0 1 25 7 M13 25 A12 12 0 0 1 25 13" /><circle cx="22" cy="22" r="3.500" fill="#fff" stroke="none" /></svg>
      <svg className="ml-[33px] h-7 w-[33px]" viewBox="0 0 33 28" fill="none" stroke="#fff" strokeWidth="2"><path d="M1 9 H5 L11 3 V25 L5 19 H1Z M16 10 Q19 14 16 18 M20 6 Q26 14 20 22" /><path d="M25 2 Q34 14 25 26" stroke="#85858b" /></svg>
      <svg className="ml-[39px] h-8 w-[34px]" viewBox="0 0 34 32" fill="none" stroke="#fff" strokeWidth="2.200" strokeLinejoin="round"><path d="M11 27 L12 20 L23 3 Q26 -1 28 4 L17 24Z M21 6 L26 9 M9 19 Q1 18 1 25 Q2 31 11 30 L12 26 M27 13 Q32 12 32 16 Q31 19 24 18" /></svg>
      <div className="ml-[25px] w-[128px] pb-[2px] text-center text-[23px] leading-[37.500px] tracking-[-0.500px]">
        <div>10:40 AM</div>
        <div>1/10/2020</div>
      </div>
      <div className="relative ml-[27px] h-[50px] w-[50px]">
        <svg className="mt-[9px] h-8 w-8" viewBox="0 0 32 32"><path d="M0 0 H32 V26 H18 L12 32 V26 H0Z" fill="#fff" /><path d="M6 7.500 H26 M6 13 H26 M6 18.500 H20" stroke="#1c1c1c" strokeWidth="2.200" /></svg>
        <div className="absolute top-[22px] left-[13px] flex h-[34px] w-[34px] items-center justify-center rounded-full border-2 border-[#8a8a8a] bg-[#333] text-[21px]">1</div>
      </div>
      <div className="ml-[23px] h-20 w-[2px] bg-[#6a6a6a]" />
      <div className="w-[7px]" />
    </div>
  );
}

function Banner({ children }: { children: string }) {
  return (
    <div className="flex h-[138px] items-center justify-center rounded-lg bg-[#33c3f0] pt-[22px] text-[90px] leading-none font-light tracking-[-2px] text-white">
      {children}
    </div>
  );
}

export default function App() {
  return (
    <div className="flex h-[1824px] w-[2736px] flex-col overflow-hidden bg-white">
      <div className={UI}>
        <TabStrip />
        <Toolbar />
      </div>
      <main className="flex-1 font-['Roboto',sans-serif]">
        <Banner>Bored?</Banner>
        <div className="mt-10"><Banner>Find an Event</Banner></div>
        <div className="mt-10 flex pl-[308px]">
          <EventForm />
          <MapPanel />
        </div>
      </main>
      <Taskbar />
    </div>
  );
}
